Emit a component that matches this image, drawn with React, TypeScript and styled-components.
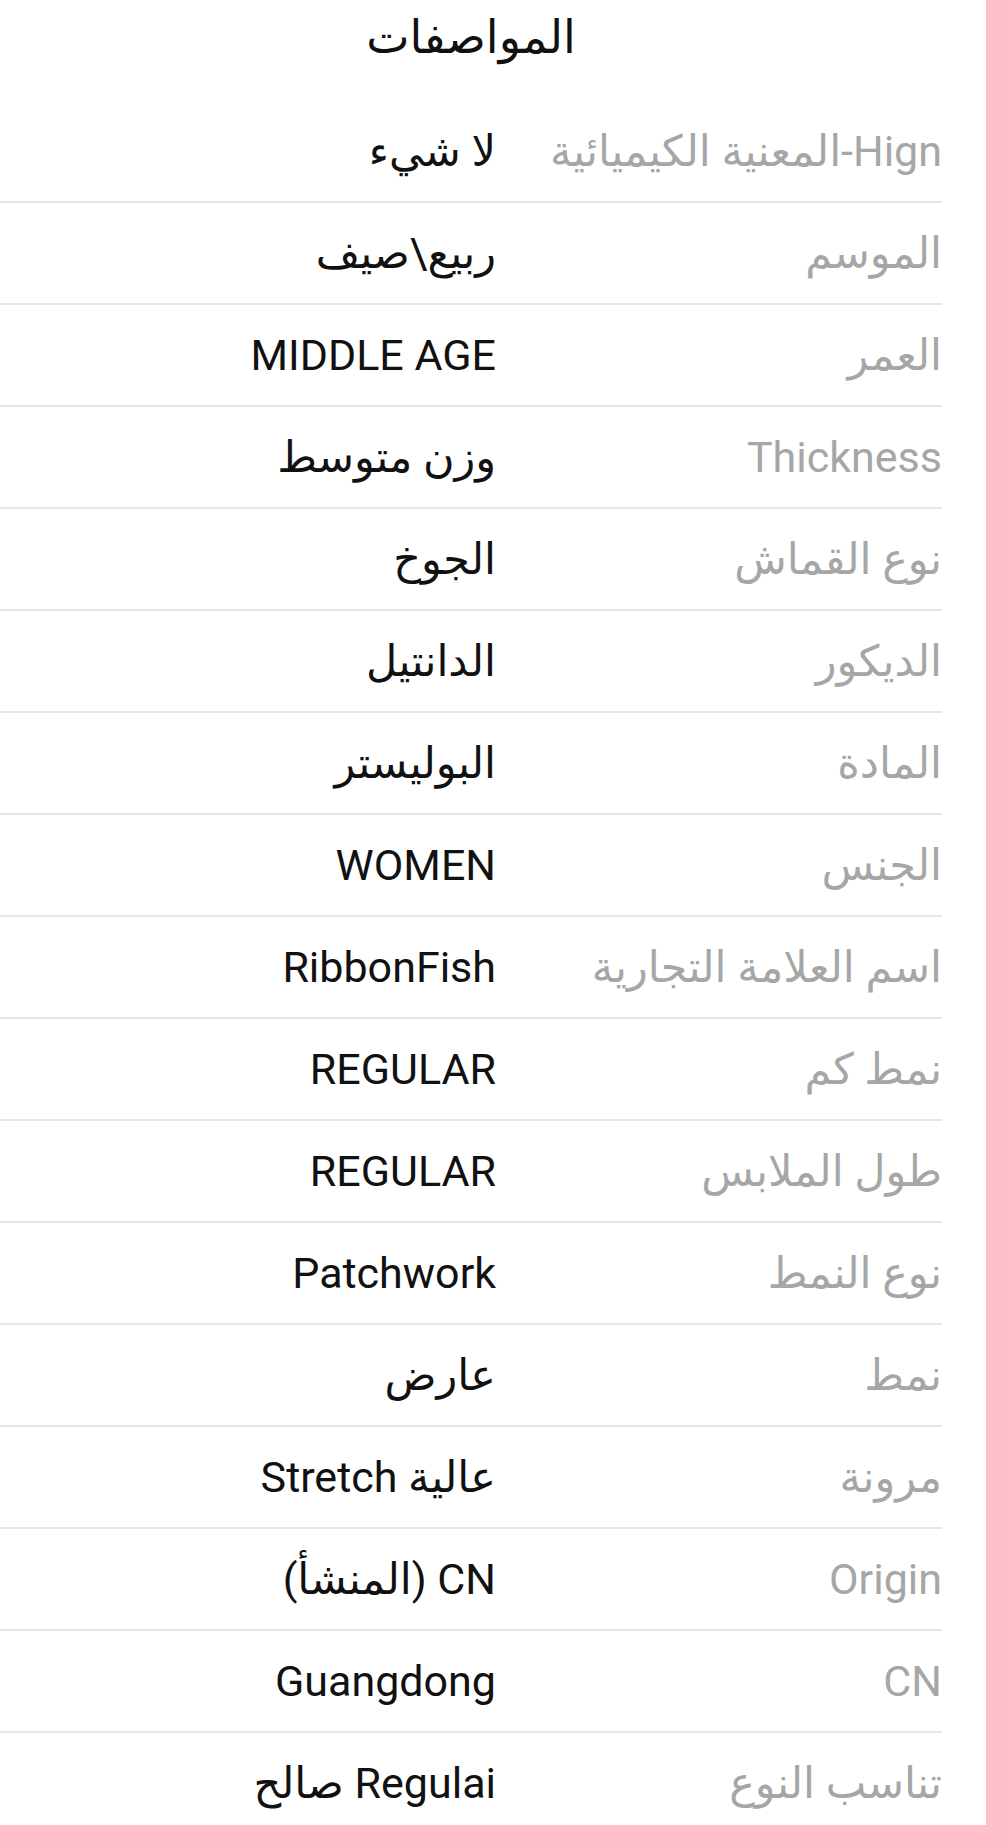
import React from "react";
import styled, { createGlobalStyle } from "styled-components";

const GlobalStyle = createGlobalStyle`
  html, body {
    margin: 0;
    padding: 0;
    background: #ffffff;
  }
  body {
    font-family: Roboto, "DejaVu Sans", sans-serif;
  }
`;

const Page = styled.div`
  width: 942px;
  direction: rtl;
  background: #ffffff;
`;

const Header = styled.div`
  height: 101px;
  display: flex;
  justify-content: center;
  align-items: flex-start;
`;

const Title = styled.h1`
  margin: 0;
  font-size: 46px;
  font-weight: 400;
  line-height: 74px;
  color: #111;
`;

const Row = styled.div`
  height: 102px;
  box-sizing: border-box;
  display: grid;
  grid-template-columns: 446px 1fr;
  align-items: center;
  border-bottom: 2px solid #e6e6e6;
`;

const Label = styled.span`
  font-size: 43px;
  color: #a6a6a6;
  white-space: nowrap;
`;

const Value = styled.span`
  font-size: 43px;
  color: #111;
  white-space: nowrap;
`;

const specs: [string, string][] = [
  ["Hign-المعنية الكيميائية", "لا شيء"],
  ["الموسم", "ربيع\\صيف"],
  ["العمر", "MIDDLE AGE"],
  ["Thickness", "وزن متوسط"],
  ["نوع القماش", "الجوخ"],
  ["الديكور", "الدانتيل"],
  ["المادة", "البوليستر"],
  ["الجنس", "WOMEN"],
  ["اسم العلامة التجارية", "RibbonFish"],
  ["نمط كم", "REGULAR"],
  ["طول الملابس", "REGULAR"],
  ["نوع النمط", "Patchwork"],
  ["نمط", "عارض"],
  ["مرونة", "عالية Stretch"],
  ["Origin", "CN (المنشأ)"],
  ["CN", "Guangdong"],
  ["تناسب النوع", "Regulai صالح"],
];

const App = () => {
  return (
    <>
      <GlobalStyle />
      <Page>
        <Header>
          <Title>المواصفات</Title>
        </Header>
        {specs.map(([label, value], i) => (
          <Row key={i}>
            <Label>{label}</Label>
            <Value>{value}</Value>
          </Row>
        ))}
      </Page>
    </>
  );
};

export default App;
